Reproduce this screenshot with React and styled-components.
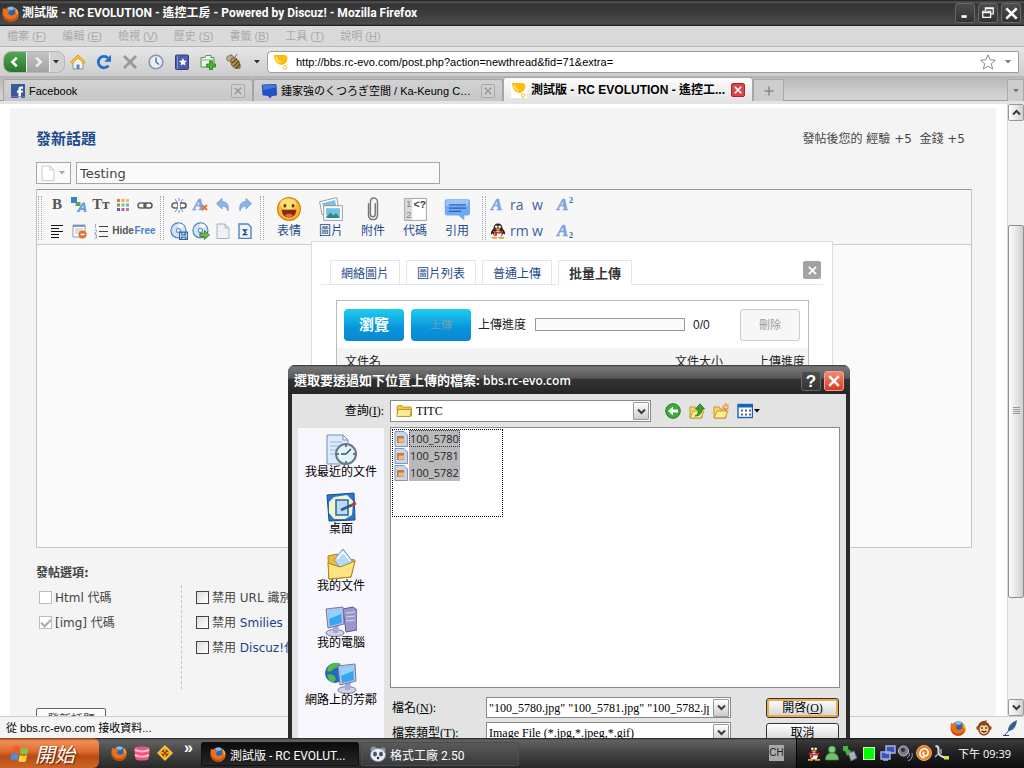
import React from "react";
import styled, { createGlobalStyle, css } from "styled-components";

const ui = '"Liberation Sans", "Noto Sans CJK TC", sans-serif';
const web = '"DejaVu Sans", "Noto Sans CJK TC", sans-serif';
const serif = '"Liberation Serif", "Noto Sans CJK TC", serif';
const caption = '"Open Sans", "Noto Sans CJK TC", sans-serif';

const GlobalStyle = createGlobalStyle`
  * {
    box-sizing: border-box;
  }
  body {
    margin: 0;
    overflow: hidden;
    font-family: ${ui};
    font-size: 12px;
    line-height: 16px;
    color: #000;
  }
  button, input, select {
    margin: 0;
    padding: 0;
    border: 0;
    border-radius: 0;
    background: none;
    font: inherit;
    color: inherit;
    outline: 0;
  }
  a {
    color: #1c3f8c;
    text-decoration: none;
  }
  svg {
    display: block;
    flex: none;
  }
`;

/* ---------- icons ---------- */

const Icon = ({ size = 16, children }) => (
  <svg width={size} height={size} viewBox="0 0 16 16" fill="none" aria-hidden="true">
    {children}
  </svg>
);

const BigIcon = ({ size = 32, children }) => (
  <svg width={size} height={size} viewBox="0 0 32 32" fill="none" aria-hidden="true">
    {children}
  </svg>
);

const Firefox = ({ size = 16 }) => (
  <Icon size={size}>
    <circle cx="8.4" cy="7.6" r="6.4" fill="#2d64ad" />
    <path d="M5 2.600c2-1.400 5-1.400 7 .4L9.500 5 6 4.600z" fill="#7fc0ea" />
    <path d="M1.400 2.500c.4.800 1 1.200 1.800 1.300C4 3 5 2.700 6 2.800 5.300 3.500 5 4.200 5.100 4.800c1 0 2 .1 2.400.7-.2.800-1.400 1-1.700 1.700.1 1.500 1.400 2.600 3 2.600 2 0 2.600-1.500 3.700-1.400-.5-2-.2-4-1.300-6 3 1.300 4.700 4 4.400 7-.4 3.700-3.400 6.400-7.200 6.400C4 15.800.6 12.600.5 8.500.4 6.200.6 4.200 1.400 2.500z" fill="#e8721a" />
    <path d="M1 7c.6 4 3.400 6.600 7 6.800 3 .1 5.600-1.500 6.500-4.500.2 3.600-2.800 6.400-6.600 6.400C3.700 15.700.6 12 1 7z" fill="#c64510" />
    <path d="M11.800 2.600c2.500 1.500 3.700 3.800 3.300 6.400-.4-.8-.9-1.300-1.500-1.500.2-1.900-.4-3.500-1.800-4.900z" fill="#fbc43a" />
  </Icon>
);

const Bulb = () => (
  <Icon>
    <rect width="16" height="16" fill="#fff" />
    <path d="M1 1h11c3.500 1 3 6 0 8.500L9.500 11C4 11 1 6 1 1z" fill="#ffbd0a" />
    <path d="M3 3c1 3 3 5 5 5" stroke="#ffe695" strokeWidth="1.500" />
    <circle cx="12" cy="13.500" r="1.700" stroke="#ffbd0a" />
  </Icon>
);

const Home = () => (
  <Icon>
    <path d="M3 7.500V15h10V7.500L8 3z" fill="#eef2f6" stroke="#83929f" />
    <path d="M8 1 .7 8 2 9.400 8 4l6 5.400L15.300 8z" fill="#fbc823" stroke="#d79100" strokeWidth=".8" />
    <path d="M6.500 15v-4.500h3V15z" fill="#5487c5" />
  </Icon>
);

const Reload = () => (
  <Icon>
    <path d="M12.500 11.500A5.700 5.700 0 1 1 12 4" stroke="#1d6fd0" strokeWidth="2.800" />
    <path d="M15 .8v7H8.300z" fill="#1d6fd0" />
  </Icon>
);

const Stop = () => (
  <Icon>
    <path d="m2 2 12 12M14 2 2 14" stroke="#999" strokeWidth="2.800" />
  </Icon>
);

const Clock = () => (
  <Icon>
    <circle cx="8" cy="8" r="6.800" fill="#e9f1f8" stroke="#8395a9" strokeWidth="1.600" />
    <path d="M8 3.500V8l3 2.400" stroke="#466689" strokeWidth="1.300" />
  </Icon>
);

const Book = () => (
  <Icon>
    <rect x="1.500" y="1" width="13" height="14.500" rx="1" fill="#4b5cab" stroke="#303d82" />
    <path d="M3.500 1.500V15" stroke="#7f8fd0" />
    <path d="m9 4 1.200 2.600 2.800.3-2.100 1.900.6 2.800L9 10.200l-2.500 1.400.6-2.800L5 6.900l2.800-.3z" fill="#fff" />
  </Icon>
);

const AddTab = () => (
  <Icon>
    <path d="M1 3.500h4l1-2h5v2h3V13H1z" fill="#eef3ee" stroke="#55965b" />
    <path d="M1 6h13" stroke="#7caf80" />
    <path d="M9.500 7h3v3h3v3h-3v3h-3v-3h-3v-3h3z" fill="#49b531" stroke="#26791b" strokeWidth=".8" />
  </Icon>
);

const Bee = () => (
  <Icon>
    <path d="M1 2 5 6M5 0l2 5M11 0 8 5" stroke="#75726a" />
    <ellipse cx="4.500" cy="4.500" rx="4" ry="3" fill="#b6b0a0" stroke="#827a60" />
    <path d="M5 5c3-3 10 1 9 9-6 2-10-3-9-9z" fill="#b69a4b" stroke="#6e5926" />
    <path d="m6 9 5-4M8 12l5-5M10 14l4-4" stroke="#594a2e" strokeWidth="1.500" />
  </Icon>
);

const Star = () => (
  <Icon>
    <path d="m8 .8 2.100 5 5.300.4-4.100 3.500 1.400 5.300L8 12.200 3.300 15l1.400-5.300L.6 6.200l5.300-.4z" fill="#fff" stroke="#8c8c8c" />
  </Icon>
);

const Down = ({ color = "#333" }) => (
  <svg width="6" height="4" viewBox="0 0 6 4" aria-hidden="true">
    <path d="M0 0h6L3 3.500z" fill={color} />
  </svg>
);

const Chevron = ({ up }) => (
  <svg width="9" height="7" viewBox="0 0 9 7" fill="none" aria-hidden="true">
    <path d={up ? "M1 5.500 4.500 2 8 5.500" : "M1 1.500 4.500 5 8 1.500"} stroke="#3b3b3b" strokeWidth="2" />
  </svg>
);

const Cross = ({ size = 10, color = "#fff", width = 2 }) => (
  <svg width={size} height={size} viewBox="0 0 10 10" aria-hidden="true">
    <path d="m1 1 8 8M9 1 1 9" stroke={color} strokeWidth={width} />
  </svg>
);

const FacebookMark = () => (
  <Icon size={14}>
    <rect width="16" height="16" fill="#3b5998" />
    <path d="M8.500 16v-6H6.800V7.500h1.700V6c0-2 1-3.200 3.200-3.200h2v2.600h-1.300c-.9 0-1.100.3-1.100 1v1.100h2.400L13.300 10h-2v6z" fill="#fff" />
    <path d="M0 14.500h16" stroke="#6d84b4" />
  </Icon>
);

const Bubble = () => (
  <Icon>
    <path d="M2 1.500 14 1c1 0 1.500.5 1.600 1.500L16 11c0 1-.5 1.500-1.500 1.700L11 13l-2 2.500L7 13l-4-.5c-1 0-1.500-.5-1.600-1.500L.8 3c0-1 .3-1.500 1.200-1.500z" fill="#234fc0" />
    <path d="m2 2.500 12.500-.7v3L2 7z" fill="#4877db" />
  </Icon>
);

const Page = ({ tint = "#fff", line = "#a9b3bf", size = 16 }) => (
  <Icon size={size}>
    <path d="M2 1h8l4 4v10.500H2z" fill={tint} stroke={line} />
    <path d="M10 1v4h4" stroke={line} />
  </Icon>
);

const ColorText = () => (
  <Icon>
    <rect width="6" height="6" x="0" y="0" fill="#3f7fd0" />
    <path d="M4.500 5h5v4h-5z" fill="#4fae48" />
    <path d="m5.500 15 6-9.500H14l1.500 9.500h-2.800l-.2-2H9.700l-1.200 2zm5.300-4h1.600l-.3-2.500z" fill="#6b9fe0" />
  </Icon>
);

const paletteColors = ["#e5734e", "#edaa58", "#e3c84d", "#6aa762", "#79bf87", "#78a9d8", "#685fa7", "#a76ba7", "#d77492"];

const Palette = () => (
  <Icon>
    {paletteColors.map((c, i) => (
      <rect key={c} x={2 + (i % 3) * 4.5} y={2 + Math.floor(i / 3) * 4.5} width="3" height="3" fill={c} />
    ))}
  </Icon>
);

const Link = ({ broken }) => (
  <Icon>
    <rect x="1" y="6" width="8" height="5" rx="2.500" stroke="#666" strokeWidth="1.500" />
    <rect x="7" y="6" width="8" height="5" rx="2.500" stroke="#555" strokeWidth="1.500" />
    {broken && <path d="m4 2 2 3M12 2l-2 3M8 1v3M4 15l2-3M12 15l-2-3M8 13v3" stroke="#5c91d3" />}
    {broken && <path d="M8 5v7" stroke="#f7f7f7" strokeWidth="2" />}
  </Icon>
);

const SmallA = ({ mark, clear }) => (
  <svg width="18" height="18" viewBox="0 0 18 18" aria-hidden="true">
    <text x="1" y="14" fontSize="17" fontStyle="italic" fontWeight="bold" fontFamily="Liberation Serif" fill="#7aa5e2" stroke="#7aa5e2" strokeWidth=".6">A</text>
    {mark && <text x="13" y={mark.y} fontSize="8" fontWeight="bold" fontFamily="Liberation Serif" fill="#3466a5">{mark.text}</text>}
    {clear && <path d="m10 9 5 5m0-5-5 5" stroke="#e8752d" strokeWidth="2" />}
  </svg>
);

const Arrow = ({ flip }) => (
  <Icon>
    <path transform={flip ? "translate(16 0) scale(-1 1)" : undefined} d="M1.500 6.500 7 1.500v3c5 0 7 3.500 6 9.500-1-3.500-2.500-5-6-5v3z" fill="#8db4e6" stroke="#6e9bd5" strokeWidth=".8" />
  </Icon>
);

const AlignLeft = () => (
  <Icon>
    <path d="M2 2.500h12M2 5.500h8M2 8.500h12M2 11.500h8M2 14.500h8" stroke="#111" strokeWidth="1.200" />
  </Icon>
);

const TableRemove = () => (
  <Icon>
    <path d="M2 2h12v12H2z" fill="#fff" stroke="#8f9aac" />
    <path d="M2 3h12" stroke="#7a9bc9" strokeWidth="2" />
    <path d="M4 6h8M4 8h8M4 10h4" stroke="#bbb" />
    <circle cx="11.500" cy="11.500" r="4" fill="#e2742c" />
    <path d="M9.500 11.500h4" stroke="#fff" strokeWidth="1.500" />
  </Icon>
);

const Numbers = () => (
  <Icon>
    <path d="M6 3.500h9M6 8.500h9M6 13.500h9" stroke="#444" />
    <path d="M2.500 1v4M1.500 7h2v1.500l-2 2h2M1.500 12h2v3h-2" stroke="#6c9dd8" strokeWidth=".8" />
  </Icon>
);

const Disc = ({ go }) => (
  <Icon size={18}>
    <circle cx="7.500" cy="7.500" r="6.700" fill="#cfe4f8" stroke="#4c7fb8" />
    <path d="m7.500 7.500 5-4a6 6 0 0 0-5-2.200z" fill="#fff" />
    <circle cx="7.500" cy="7.500" r="1.800" fill="#fff" stroke="#6896c8" />
    {go ? (
      <path d="M7 10h4V7.500l4.500 4-4.500 4V13H7z" fill="#6fbd41" stroke="#357b26" strokeWidth=".8" />
    ) : (
      <path d="M8.500 9h7v6.500h-7zM10.500 9v2.500h3V9M10 15.500v-2h4v2" fill="#cfe0f3" stroke="#315f98" strokeWidth=".9" />
    )}
  </Icon>
);

const Sigma = () => (
  <Icon>
    <path d="M2 1h9l3 3v11.500H2z" fill="#eef5fd" stroke="#4d85c3" strokeWidth="1.400" />
    <path d="M10.500 6.800h-4l2.200 2.400-2.200 2.500h4" stroke="#1b3f77" strokeWidth="1.300" />
  </Icon>
);

const Smile = () => (
  <BigIcon size={26}>
    <circle cx="16" cy="16" r="14" fill="#fdb72c" stroke="#d58112" strokeWidth="1.500" />
    <ellipse cx="15" cy="10" rx="10" ry="7" fill="#fddf70" />
    <ellipse cx="11" cy="12" rx="1.800" ry="2.300" fill="#5f3513" />
    <ellipse cx="21" cy="12" rx="1.800" ry="2.300" fill="#5f3513" />
    <path d="M7 17h18c0 6-4 9.500-9 9.500S7 23 7 17z" fill="#842b12" />
    <path d="M11 24c2-3 8-3 10 0-3 2.500-7 2.500-10 0z" fill="#ea6551" />
  </BigIcon>
);

const Photos = () => (
  <BigIcon size={26}>
    <path d="m2 7 21-5 3 16-21 5z" fill="#fff" stroke="#81898f" />
    <path d="m5 9 16-4 2 10-15 4z" fill="#7dbee1" />
    <path d="M7 12h23v18H7z" fill="#fff" stroke="#81898f" />
    <path d="M10 15h17v12H10z" fill="#74c2df" />
    <path d="m10 27 5-7 4 4 3-3 5 6z" fill="#2a8a8a" />
  </BigIcon>
);

const Clip = () => (
  <BigIcon size={26}>
    <path d="M10.500 9v14c0 3.500 2 6 5.500 6s5.500-2.500 5.500-6V8c0-3-1.500-5.500-4.500-5.500S12.800 5 12.800 8v14c0 2 1 3.500 3 3.500s3-1.500 3-3.500V9" stroke="#777" strokeWidth="1.800" />
  </BigIcon>
);

const Code = () => (
  <BigIcon size={26}>
    <path d="M3 3h27v27H3z" fill="#fff" stroke="#8e8e8e" />
    <path d="M3.500 3.500h9v26h-9z" fill="#d9d9d9" />
    <text x="5" y="14" fontSize="12" fontFamily="Liberation Sans" fill="#888">1</text>
    <text x="5" y="27" fontSize="12" fontFamily="Liberation Sans" fill="#888">2</text>
    <text x="14" y="15" fontSize="13" fontWeight="bold" fontFamily="Liberation Mono" fill="#444">&lt;?</text>
  </BigIcon>
);

const Quote = () => (
  <BigIcon size={26}>
    <path d="M4 4h25c2 0 3 1 3 3v14c0 2-1 3-3 3h-4v6l-7-6H4c-2 0-3-1-3-3V7c0-2 1-3 3-3z" fill="#73a9f4" />
    <path d="M3 5h27v7H2z" fill="#9cc6fb" />
    <path d="M6 11h21M6 15h21M6 19h15" stroke="#2b5fb3" strokeWidth="1.500" />
  </BigIcon>
);

const Penguin = ({ size = 16 }) => (
  <Icon size={size}>
    <path d="M8 .5c3 0 4.500 2 4.500 5 2 2 3 4 2.500 6l-2-1c-.5 2-2 4-5 4s-4.500-2-5-4l-2 1c-.5-2 .5-4 2.500-6 0-3 1.500-5 4.500-5z" fill="#2b2222" />
    <ellipse cx="8" cy="11" rx="3.700" ry="3.500" fill="#fff" />
    <circle cx="6.300" cy="3.700" r="1.300" fill="#fff" />
    <circle cx="9.700" cy="3.700" r="1.300" fill="#fff" />
    <path d="M5 6c2-1 4-1 6 0-2 1.500-4 1.500-6 0zM2 14h5v1.700H2zM9 14h5v1.700H9z" fill="#f7a022" />
    <path d="M3 7.500c3 1.500 7 1.500 10 0V9.400c-2 1-4 1.300-6 1.100v2.200H5V10L3 9.300z" fill="#d92b22" />
  </Icon>
);

const Folder = ({ size = 16 }) => (
  <Icon size={size}>
    <path d="M1 4c0-1 .5-1.500 1.500-1.500H6L7.500 4H14c1 0 1.500.5 1.500 1.500V13h-14z" fill="#f0c740" stroke="#b58c1b" strokeWidth=".8" />
    <path d="M.8 13.500 2 6.500h13.300L14 13.500z" fill="#fdeb94" stroke="#b58c1b" strokeWidth=".8" />
  </Icon>
);

const GoBack = () => (
  <Icon>
    <circle cx="8" cy="8" r="7.300" fill="#3eaa38" stroke="#23761f" />
    <path d="M3 8 8 3.500v3h5v3H8v3z" fill="#fff" />
  </Icon>
);

const GoUp = () => (
  <Icon>
    <path d="M1 4h5l1 2h6v9H1z" fill="#f6d865" stroke="#b58c1b" strokeWidth=".8" />
    <path d="m1 15 3-7h11l-3 7z" fill="#fdeb94" stroke="#b58c1b" strokeWidth=".8" />
    <path d="M6 13c3-1 3.500-3 3-7H6.500L11 .8 15.500 6H13c0 4-2 7-7 7z" fill="#38a030" stroke="#1f6f1a" strokeWidth=".8" />
  </Icon>
);

const NewFolder = () => (
  <Icon>
    <path d="M1 4h5l1 2h6v9H1z" fill="#f6d865" stroke="#b58c1b" strokeWidth=".8" />
    <path d="m1 15 3-7h11l-3 7z" fill="#fdeb94" stroke="#b58c1b" strokeWidth=".8" />
    <path d="M13 0v8M9 4h8M10.500 1.500l5 5m0-5-5 5" stroke="#ee6a28" />
    <circle cx="13" cy="4" r="1.500" fill="#ffd76b" />
  </Icon>
);

const Views = () => (
  <Icon>
    <rect x="1" y="1.500" width="14.500" height="13" fill="#fff" stroke="#1763bb" strokeWidth="1.400" />
    <path d="M1 3h14.500" stroke="#1763bb" strokeWidth="3" />
    <path d="M4 7.500h2m2 0h2m2 0h2M4 11.500h2m2 0h2m2 0h2" stroke="#426b9a" strokeWidth="2" />
  </Icon>
);

const Jpeg = () => (
  <Icon>
    <path d="M2 .5h9l3.500 3.500v11.500H2z" fill="#c9d5e8" stroke="#8194ba" />
    <path d="M4 5h7v7H4z" fill="#c07a4a" />
    <path d="M5.500 7.500h6v4h-6z" fill="#eab988" />
  </Icon>
);

const Recent = () => (
  <BigIcon>
    <path d="M2 1h16l5 5v24H2z" fill="#dcebfb" stroke="#738db4" />
    <path d="M18 1v5h5z" fill="#fff" stroke="#738db4" />
    <path d="M5 8h12M5 12h12M5 16h8M5 20h7" stroke="#96b4d8" />
    <circle cx="21" cy="20" r="10" fill="#e4f2f9" stroke="#647889" strokeWidth="2" />
    <path d="m21 20 5-5M21 20h-5M21 11v2M21 27v2M12 20h2M28 20h2" stroke="#3b5263" strokeWidth="1.500" />
  </BigIcon>
);

const Desktop = () => (
  <BigIcon>
    <path d="m2 4 27-2 1 27-26 1z" fill="#2b76d0" stroke="#174b91" />
    <path d="m9 6 13-2 6 6-1 14-7 4H9l-5-6V11z" fill="#f4f3cb" />
    <path d="M11 9h12v15H11z" fill="#b9dcfa" stroke="#2467aa" strokeWidth="1.500" />
    <path d="m16 19 11-5" stroke="#35577c" strokeWidth="2.500" />
    <path d="m27 14 4-2" stroke="#c6383c" strokeWidth="3" />
  </BigIcon>
);

const Documents = () => (
  <BigIcon>
    <path d="m3 8 9-2 3 4 15 2-4 17-22 2z" fill="#f0ba35" stroke="#ae811d" />
    <path d="M9 12 18 1l10 13-9 11z" fill="#b5d9f5" stroke="#6e97c1" />
    <path d="m12 11 6-7 7 9" stroke="#fff" strokeWidth="1.500" />
    <path d="m4 31-1-16 12 4 15-6-4 16z" fill="#fee382" stroke="#ae811d" />
  </BigIcon>
);

const Monitor = ({ globe }) => (
  <BigIcon>
    {globe ? (
      <>
        <circle cx="10" cy="11" r="10" fill="#2467c1" />
        <path d="M3 5c4-5 9-5 13-3-3 2-4 4-8 5-1 3-4 3-6 2zm-1 8c4-2 8 0 9 4-2 4-5 4-7 1z" fill="#52b94b" />
      </>
    ) : (
      <path d="m18 4 10-2 4 3v20l-11 2z" fill="#9a97cf" stroke="#58588e" />
    )}
    {!globe && <path d="m21 8 9-1M21 12l9-1M21 16l9-1" stroke="#d7d6f0" />}
    <g transform={globe ? "translate(12 0)" : undefined}>
      <ellipse cx="10" cy="28" rx="9" ry="3.500" fill="#d0d2e6" stroke="#7477a2" />
      <path d="M8 20h6l-1 8H8z" fill="#a8abd1" />
      <path d="m1 4 17-2 1 17-16 4z" fill="#bfc5e3" stroke="#7177a9" />
      <path d="m3 6 13-2 1 14-12 3z" fill="#39a4ef" />
      <path d="m3 6 13-2v5L4 14z" fill="#8ed3fb" />
    </g>
  </BigIcon>
);

const WindowsFlag = () => (
  <Icon size={20}>
    <path d="M2.500 3c2-1 4-1 5.500 0L7 8C5.500 7 3.500 7 1.500 8z" fill="#f05a32" />
    <path d="M9 3.500c2 1 4 1 6 0L14 8.500c-2 1-4 1-6 0z" fill="#86c440" />
    <path d="M1.200 9c2-1 4-1 5.600 0l-1 5C4 13 2 13 .2 14z" fill="#4c8ee8" />
    <path d="M7.700 9.500c2 1 4 1 6 0l-1 5c-2 1-4 1-6 0z" fill="#ffd13c" />
  </Icon>
);

const Candy = () => (
  <Icon>
    <path d="M.5 3c1-2 14-2 15 0v4l-1 7c-1 2-12 2-13 0l-1-7z" fill="#ee5680" />
    <path d="M1 5c5 2 9 2 14 0M1 10c4 2 10 2 14 0" stroke="#ffc0ce" strokeWidth="2" />
  </Icon>
);

const Diamond = () => (
  <Icon>
    <path d="m8 0 8 8-8 8-8-8z" fill="#f6c22e" />
    <path d="m8 3 5 5-5 5-5-5z" fill="#893818" />
    <path d="M8 3v10M3 8h10" stroke="#f6c22e" strokeWidth="1.500" />
    <circle cx="8" cy="8" r="1.500" fill="#c72f22" />
  </Icon>
);

const Panda = () => (
  <Icon>
    <circle cx="3.500" cy="3.500" r="3" fill="#8a98a8" />
    <circle cx="13" cy="4" r="2.500" fill="#8a98a8" />
    <ellipse cx="8" cy="9" rx="7.500" ry="6.500" fill="#eaf0f5" stroke="#8a98a8" strokeWidth=".8" />
    <ellipse cx="5" cy="8" rx="2" ry="2.500" fill="#435568" />
    <ellipse cx="11" cy="8" rx="2" ry="2.500" fill="#435568" />
    <circle cx="8" cy="12" r="1.200" fill="#222" />
  </Icon>
);

const Monkey = () => (
  <Icon>
    <circle cx="2.500" cy="8" r="2.300" fill="#a95e25" />
    <circle cx="13.500" cy="8" r="2.300" fill="#a95e25" />
    <path d="M2 8c0-5 3-7 6-7l3-1-1 2c3 1 4 3 4 7 0 4-3 6.500-6 6.500S2 13 2 8z" fill="#8c4619" />
    <path d="M4 7c1-2 3-2 4-1 1-1 3-1 4 1 1 2 .5 7-4 7s-5-5-4-7z" fill="#fbd797" />
    <path d="M6 7v2M10 7v2M5.500 11c2 1.500 3 1.500 5 0" stroke="#3c2010" strokeWidth="1.200" />
  </Icon>
);

const Quill = () => (
  <Icon>
    <path d="M15 0c-1 7-3 10-8 11L6 9c1-4 4-7 9-9z" fill="#326396" />
    <path d="M8 9 3 15M1 15.500h6" stroke="#22486f" />
  </Icon>
);

const Buddy = () => (
  <Icon>
    <circle cx="8" cy="4.500" r="3.500" fill="#82cd78" stroke="#3b8539" strokeWidth=".7" />
    <path d="M1.500 15c0-5 2.500-7 6.500-7s6.500 2 6.500 7z" fill="#72bf69" stroke="#3b8539" strokeWidth=".7" />
  </Icon>
);

const Eject = () => (
  <Icon>
    <path d="m6 8 6-2 3 7-6 3z" fill="#aab3ba" stroke="#59636b" />
    <path d="M1 1h5v3l3 2-4 5-2-5H1z" fill="#46b33f" />
  </Icon>
);

const Network = () => (
  <Icon>
    <path d="M6 1h9v7H6zM1 7h9v7H1z" fill="#3856b8" stroke="#aab4df" strokeWidth="1.400" />
    <path d="M3 15h5" stroke="#aab4df" strokeWidth="1.500" />
  </Icon>
);

const Speaker = () => (
  <Icon>
    <circle cx="5.500" cy="6" r="5" fill="#777b86" stroke="#bec3cc" />
    <circle cx="5" cy="5" r="2" fill="#2c3039" />
    <path d="M11 8c1 2 0 4-2 5M14 8c1 4-1 7-4 8" stroke="#9aa6d2" />
  </Icon>
);

const Shield = () => (
  <Icon>
    <circle cx="8" cy="8" r="7.500" fill="#f07c18" stroke="#ffc57e" strokeWidth=".8" />
    <path d="M8.500 12.800C5 12.500 3.500 10 4 7.300 4.600 4 9 2.500 11.300 5c2 2.500.5 5.800-2 5.800C7 10.800 6.500 8 8.300 7" stroke="#fff" strokeWidth="1.700" />
  </Icon>
);

const Plug = () => (
  <Icon>
    <path d="M1.500 1c1.500 0 3 1 3 3v4c0 2 2 3 6 4.500" stroke="#ddd" strokeWidth="2" />
    <path d="m4 9-3 3M7 4v5" stroke="#aaa" strokeWidth="1.500" />
    <path d="M10 11h5v3.500h-5z" fill="#d9e04c" />
  </Icon>
);

/* ---------- browser chrome ---------- */

const Screen = styled.div`
  display: flex;
  flex-direction: column;
  height: 100vh;
`;

const Workspace = styled.div`
  position: relative;
  flex: 1;
  min-height: 0;
  display: flex;
  flex-direction: column;
  overflow: hidden;
`;

const TitleBar = styled.header`
  display: flex;
  align-items: center;
  gap: 3px;
  height: 26px;
  padding: 0 3px 0 2px;
  background: linear-gradient(#1c1c1c 0, #565656 2px, #333 4px, #3c3c3c 50%, #4b4b4b 24px, #151515);
  color: #fff;
  font: bold 12px/16px Roboto, "Noto Sans CJK TC", sans-serif;
`;

const WindowTitle = styled.span`
  flex: 1;
  white-space: nowrap;
`;

const CaptionButton = styled.button`
  display: grid;
  place-items: center;
  flex: none;
  width: 20px;
  height: 20px;
  border: 1px solid ${p => (p.$danger ? "#f4a08f" : "#686868")};
  border-radius: 3px;
  background: ${p => (p.$danger ? "linear-gradient(#f28a72, #d93b1d)" : "linear-gradient(#4d4d4d, #333)")};
  color: #fff;
  font: bold 17px ${ui};
`;

const MenuBar = styled.nav`
  display: flex;
  align-items: center;
  gap: 16px;
  height: 21px;
  padding: 0 7px;
  background: #dadada;
  border-bottom: 1px solid #b8b8b8;
  font-size: 11px;
`;

const MenuItem = styled.button`
  color: #a9a9a9;
  white-space: nowrap;
`;

const NavBar = styled.div`
  display: flex;
  align-items: center;
  gap: 10px;
  height: 29px;
  padding: 0 5px 0 3px;
  background: linear-gradient(#e6e6e6, #cdcdcd);
`;

const History = styled.div`
  display: flex;
  align-items: center;
  height: 22px;
  padding-right: 2px;
  margin-right: -5px;
  border: 1px solid #b4b4b4;
  border-radius: 8px;
  overflow: hidden;
  background: #d2d2d2;
`;

const HistoryButton = styled.button`
  display: grid;
  place-items: center;
  width: 23px;
  height: 22px;
  background: ${p => (p.$on ? "linear-gradient(#5aa957, #217525)" : "linear-gradient(#c5c5c5, #a2a2a2)")};
  border-right: 1px solid #eee;
`;

const IconButton = styled.button`
  display: grid;
  place-items: center;
  flex: none;
  min-width: ${p => p.$w || 16}px;
`;

const AddressBar = styled.div`
  flex: 1;
  display: flex;
  align-items: center;
  gap: 7px;
  height: 22px;
  margin-left: -5px;
  padding: 0 5px;
  border: 1px solid #9d9d9d;
  border-radius: 4px 0 0 4px;
  background: #fff;
  font-size: 11px;
`;

const Address = styled.input`
  flex: 1;
  min-width: 0;
`;

const TabBar = styled.div`
  display: flex;
  align-items: flex-end;
  height: 28px;
  padding-left: 3px;
  background: linear-gradient(#b5b5b5, #d3d3d3 20px);
  border-bottom: 3px solid #e4e4e4;
  box-shadow: inset 0 -1px #9c9c9c;
`;

const BrowserTab = styled.div`
  display: flex;
  align-items: center;
  gap: 4px;
  flex: 0 1 250px;
  min-width: 0;
  height: ${p => (p.$active ? 24 : 22)}px;
  padding: 0 7px;
  border: 1px solid #a5a5a5;
  border-bottom: 0;
  border-radius: 3px 3px 0 0;
  background: ${p => (p.$active ? "linear-gradient(#fdfdfd, #e4e4e4)" : "linear-gradient(#d2d2d2, #c6c6c6)")};
  font-weight: ${p => (p.$active ? "bold" : "normal")};
  font-size: ${p => (p.$active ? 12 : 11)}px;
`;

const TabLabel = styled.span`
  flex: 1;
  overflow: hidden;
  white-space: nowrap;
  text-overflow: ellipsis;
`;

const TabClose = styled.button`
  display: grid;
  place-items: center;
  flex: none;
  width: 14px;
  height: 14px;
  border: 1px solid ${p => (p.$active ? "#a42b2b" : "#a9a9a9")};
  border-radius: 2px;
  background: ${p => (p.$active ? "#d64949" : "#cfcfcf")};
`;

const SideTab = styled.button`
  display: grid;
  place-items: center;
  width: ${p => p.$w}px;
  height: 22px;
  border: 1px solid #a9a9a9;
  border-bottom: 0;
  background: #cdcdcd;
  margin-left: ${p => (p.$end ? "auto" : 0)};
`;

/* ---------- page ---------- */

const Viewport = styled.div`
  flex: 1;
  min-height: 0;
  display: flex;
`;

const PageArea = styled.main`
  flex: 1;
  min-width: 0;
  padding: 4px 11px 0 10px;
  background: #fff;
  overflow: hidden;
  font-family: ${web};
  color: #444;
`;

const Sheet = styled.div`
  min-height: 100%;
  padding: 21px 24px 0 26px;
  background: #f4f4f4;
`;

const Heading = styled.div`
  display: flex;
  justify-content: space-between;
  align-items: center;
  height: 20px;
  padding-right: 7px;
`;

const H1 = styled.h1`
  margin: 0;
  font-size: 15px;
  line-height: 20px;
  color: #1e4a8c;
`;

const Reward = styled.span`
  white-space: pre;
`;

const SubjectRow = styled.div`
  display: flex;
  gap: 5px;
  margin: 13px 0 5px;
`;

const TypeButton = styled.button`
  display: flex;
  align-items: center;
  gap: 3px;
  width: 35px;
  height: 22px;
  padding-left: 3px;
  border: 1px solid #a5a5a5;
  background: #fafafa;
`;

const Subject = styled.input`
  width: 364px;
  height: 22px;
  padding: 0 3px;
  border: 1px solid #a5a5a5;
  background: #fafafa;
  font-size: 13px;
`;

const Editor = styled.section`
  position: relative;
  height: 359px;
  border: 1px solid #c5c5c5;
  border-top-color: #999;
  background: #fafafa;
`;

const Toolbar = styled.div`
  display: flex;
  align-items: center;
  gap: 4px;
  height: 55px;
  padding: 1px 0 0 1px;
  border-bottom: 1px solid #ccc;
  background: #f7f7f7;
`;

const Grip = styled.span`
  width: 4px;
  height: 44px;
  border: dotted #aaa;
  border-width: 0 1px;
`;

const ToolGrid = styled.div`
  display: grid;
  grid-template-columns: repeat(${p => p.$cols}, 22px);
  grid-auto-rows: 26px;
`;

const Tool = styled.button`
  display: grid;
  place-items: center;
  min-width: 0;
  white-space: nowrap;
  ${p => p.$letter && css`
    font: bold 15px ${serif};
    color: #555;
  `}
  ${p => p.$tag && css`
    font: bold 10px "Liberation Sans", sans-serif;
    color: ${p.$tag};
  `}
`;

const BigTools = styled.div`
  display: grid;
  grid-template-columns: repeat(5, 42px);
`;

const BigTool = styled.button`
  display: grid;
  justify-items: center;
  row-gap: 1px;
  color: #1e4a8c;
  line-height: 16px;
`;

const ExtraTools = styled.div`
  display: grid;
  grid-template-columns: 20px 22px 24px 20px;
  grid-auto-rows: 26px;
  align-items: center;
  color: #3c5fa0;
  font: 14px/16px "Open Sans", sans-serif;
`;

const Options = styled.section`
  padding-top: 17px;
`;

const OptionsTitle = styled.h2`
  margin: 0 0 4px;
  font-size: 12px;
  line-height: 16px;
`;

const OptionColumns = styled.div`
  display: flex;
`;

const OptionColumn = styled.div`
  min-height: 104px;
  width: ${p => p.$w}px;
  padding-left: ${p => p.$pad}px;
  border-right: ${p => (p.$line ? "1px dashed #c4c4c4" : 0)};
`;

const Option = styled.label`
  display: flex;
  align-items: center;
  gap: 3px;
  height: 25px;
  white-space: pre;
`;

const Checkbox = styled.input.attrs({ type: "checkbox" })`
  appearance: none;
  display: grid;
  place-items: center;
  width: 13px;
  height: 13px;
  border: 1px solid #444;
  background: linear-gradient(135deg, #ddd, #fff);
  &:disabled {
    border-color: #bdbdbd;
    background: #fff;
  }
  &:checked::after {
    content: "";
    width: 8px;
    height: 4px;
    border: solid #aaa;
    border-width: 0 0 2px 2px;
    transform: translateY(-1px) rotate(-45deg);
  }
`;

const Submit = styled.button`
  width: 70px;
  height: 24px;
  margin-top: 19px;
  border: 1px solid #666;
  border-radius: 2px;
  background: #fafafa;
`;

const Scrollbar = styled.div`
  display: flex;
  flex-direction: column;
  width: 17px;
  background: #f1f1f1;
  border-left: 1px solid #ddd;
`;

const ScrollButton = styled.button`
  display: grid;
  place-items: center;
  height: 17px;
  border: 1px solid #999;
  border-radius: 2px;
  background: linear-gradient(90deg, #fff, #d0d0d0);
`;

const ScrollGap = styled.div`
  flex: ${p => p.$size};
`;

const ScrollThumb = styled.div`
  flex: 373;
  display: grid;
  place-items: center;
  border: 1px solid #8f8f8f;
  border-radius: 2px;
  background: linear-gradient(90deg, #fdfdfd, #cfcfcf);
  &::after {
    content: "";
    width: 7px;
    height: 8px;
    background: repeating-linear-gradient(#999 0 1px, transparent 1px 2px);
  }
`;

const StatusBar = styled.footer`
  display: flex;
  align-items: center;
  justify-content: space-between;
  height: 22px;
  padding: 0 6px;
  border-top: 1px solid #ccc;
  background: #f4f4f4;
  font-size: 11px;
`;

const StatusIcons = styled.div`
  display: flex;
  gap: 10px;
`;

/* ---------- upload popup ---------- */

const Popup = styled.div`
  position: absolute;
  top: 51px;
  left: 274px;
  width: 522px;
  height: 306px;
  padding: 18px 9px 0;
  border: 1px solid #ddd;
  background: #fff;
`;

const PopupTabs = styled.div`
  display: flex;
  gap: 6px;
  height: 25px;
  padding: 0 2px 0 9px;
  border-bottom: 1px solid #e0e6ec;
`;

const PopupTab = styled.button`
  height: 25px;
  padding: 2px 10px 0;
  border: 1px solid #e0e6ec;
  border-bottom-color: ${p => (p.$active ? "#fff" : "#e0e6ec")};
  background: #fff;
  color: ${p => (p.$active ? "#333" : "#1e4a8c")};
  font-weight: ${p => (p.$active ? "bold" : "normal")};
  font-size: ${p => (p.$active ? 13 : 12)}px;
`;

const PopupClose = styled.button`
  display: grid;
  place-items: center;
  width: 18px;
  height: 18px;
  margin: 1px 0 0 auto;
  border-radius: 2px;
  background: #a3a3a3;
`;

const Uploader = styled.div`
  height: 200px;
  margin: 15px 14px 0 15px;
  border: 1px solid #bbb;
  background: #fff;
  font-family: ${ui};
  color: #222;
`;

const UploadBar = styled.div`
  display: flex;
  align-items: center;
  gap: 7px;
  height: 47px;
  padding: 0 8px 0 7px;
`;

const UploadButton = styled.button`
  width: 60px;
  height: 32px;
  border-radius: 4px;
  background: linear-gradient(#1fcdf0, #0894dc 60%, #0a87d0);
  color: #fff;
  font-size: 15px;
  font-weight: bold;
  &:disabled {
    color: #6f9fb3;
    font-size: 11px;
    font-weight: normal;
  }
`;

const DeleteButton = styled.button`
  width: 60px;
  height: 32px;
  margin-left: auto;
  border: 1px solid #ccc;
  border-radius: 3px;
  background: #f7f7f7;
  color: #999;
  font-size: 11px;
`;

const Meter = styled.div`
  width: 150px;
  height: 13px;
  margin: 0 1px 0 2px;
  border: 1px solid #999;
  background: #fafafa;
`;

const UploadTable = styled.table`
  width: 100%;
  border-collapse: collapse;
  background: #f3f3f3;
  th {
    height: 26px;
    padding: 2px 0 0 8px;
    font-weight: normal;
    text-align: left;
  }
  th:nth-child(2) {
    width: 82px;
    padding-left: 0;
  }
  th:nth-child(3) {
    width: 51px;
    padding-left: 0;
  }
`;

/* ---------- file dialog ---------- */

const Dialog = styled.section`
  position: absolute;
  top: 365px;
  left: 288px;
  width: 562px;
  height: 400px;
  border: solid #2b2b2b;
  border-width: 0 4px;
  border-radius: 7px 7px 0 0;
  background: #e3e3e3;
  font-family: ${serif};
`;

const DialogTitle = styled.header`
  display: flex;
  align-items: center;
  gap: 3px;
  height: 29px;
  margin: 0 -4px;
  padding: 2px 6px 0;
  border-radius: 7px 7px 0 0;
  background: linear-gradient(#333 0, #777 2px, #585858 45%, #333 50%, #262626);
  color: #fff;
  font: bold 13px/16px ${caption};
`;

const DialogSite = styled.span`
  font-size: 12px;
  font-weight: 600;
`;

const DialogBody = styled.div`
  display: grid;
  grid-template-columns: 86px 1fr;
  column-gap: 6px;
  padding: 6px 6px 0;
`;

const LookLabel = styled.label`
  justify-self: end;
  align-self: center;
`;

const LookRow = styled.div`
  display: flex;
  align-items: center;
  gap: 8px;
  height: 22px;
`;

const Combo = styled.div`
  display: flex;
  align-items: center;
  width: ${p => p.$w}px;
  height: ${p => p.$h || 21}px;
  padding: 0 1px 0 ${p => (p.$h ? 5 : 2)}px;
  gap: 4px;
  border: 1px solid #8a8a8a;
  background: #fff;
  select, input {
    appearance: none;
    flex: 1;
    min-width: 0;
  }
`;

const ComboArrow = styled.button`
  display: grid;
  place-items: center;
  width: 16px;
  height: 18px;
  border: 1px solid #999;
  border-radius: 1px;
  background: linear-gradient(#fff, #ccc);
`;

const DialogTools = styled.div`
  display: flex;
  gap: 8px;
  margin-left: 6px;
`;

const ViewButton = styled.button`
  display: flex;
  align-items: center;
  gap: 1px;
`;

const Places = styled.div`
  display: flex;
  flex-direction: column;
  align-self: stretch;
  margin-top: 6px;
  padding-top: 6px;
  background: #f8f7fd;
`;

const Place = styled.button`
  display: flex;
  flex-direction: column;
  align-items: center;
  height: 57px;
  line-height: 13px;
  white-space: nowrap;
`;

const Files = styled.div`
  padding-top: 5px;
`;

const FileList = styled.ul`
  position: relative;
  height: 261px;
  width: 450px;
  margin: 0;
  padding: 2px 2px;
  border: 1px solid #8a8a8a;
  background: #fff;
  list-style: none;
`;

const FileRow = styled.li`
  display: flex;
  align-items: center;
  height: 17px;
`;

const FileName = styled.span`
  height: 17px;
  padding: 0 1px;
  background: #b9b9b9;
  color: #2c1c30;
  font: 11px/17px "Open Sans", sans-serif;
  outline: ${p => (p.$focus ? "1px dotted #333" : 0)};
  outline-offset: -1px;
`;

const Marquee = styled.div`
  position: absolute;
  top: 1px;
  left: 1px;
  width: 111px;
  height: 88px;
  border: 1px dotted #000;
`;

const FileForm = styled.div`
  display: grid;
  grid-template-columns: 93px 245px 73px;
  grid-auto-rows: 21px;
  column-gap: 1px;
  row-gap: 4px;
  margin-top: 9px;
  padding-left: 2px;
  align-items: center;
`;

const DialogButton = styled.button`
  height: 20px;
  width: 73px;
  margin-left: 34px;
  border: 1px solid #333;
  border-radius: 3px;
  background: linear-gradient(#fff, #d2d2d2);
  box-shadow: ${p => (p.$primary ? "inset 0 0 0 2px #eda94a" : "none")};
`;

/* ---------- taskbar ---------- */

const Taskbar = styled.footer`
  display: flex;
  align-items: stretch;
  height: 30px;
  background: linear-gradient(#222 0, #626262 2px, #4b4b4b 12px, #272727);
  color: #fff;
`;

const Start = styled.button`
  display: flex;
  align-items: center;
  gap: 5px;
  width: 99px;
  padding-left: 10px;
  border-radius: 0 6px 6px 0;
  background: linear-gradient(#8b3f16 0, #f09058 3px, #df6b2c 45%, #b84c14 60%, #cc6527);
  font: italic 20px ${ui};
  text-shadow: 1px 1px 1px #5c2205;
`;

const QuickLaunch = styled.div`
  display: flex;
  align-items: center;
  gap: 7px;
  width: 102px;
  padding-left: 12px;
`;

const More = styled.button`
  align-self: flex-start;
  padding: 2px 0 0 4px;
  font-size: 16px;
  font-weight: bold;
`;

const Task = styled.button`
  display: flex;
  align-items: center;
  gap: 4px;
  flex: 0 1 158px;
  height: 24px;
  margin: 4px 2px 0 0;
  padding: 0 8px;
  border: 1px solid ${p => (p.$active ? "#111" : "#4d4d4d")};
  border-radius: 2px;
  background: ${p => (p.$active ? "linear-gradient(#0c0c0c, #262626)" : "linear-gradient(#5a5a5a, #3a3a3a)")};
  font: 12px Roboto, "Noto Sans CJK TC", sans-serif;
  white-space: nowrap;
`;

const Lang = styled.button`
  align-self: center;
  width: 15px;
  height: 16px;
  margin: 0 12px 0 auto;
  background: #a9a9a9;
  color: #222;
  font-size: 10px;
`;

const Tray = styled.div`
  display: flex;
  align-items: center;
  gap: 2px;
  padding: 0 13px 0 9px;
  border-left: 1px solid #000;
  background: linear-gradient(#111 0, #3b3b3b 2px, #262626 12px, #0c0c0c);
`;

const GreenBox = styled.span`
  width: 12px;
  height: 13px;
  margin: 0 3px;
  border: 1px solid #d5f5cf;
  background: #0f0;
`;

const Time = styled.time`
  margin-left: 6px;
  font: 11px ${caption};
  white-space: nowrap;
`;

const menus = ["檔案 (F)", "編輯 (E)", "檢視 (V)", "歷史 (S)", "書籤 (B)", "工具 (T)", "說明 (H)"];

const navIcons = [
  ["首頁", Home],
  ["重新載入", Reload],
  ["停止", Stop],
  ["歷史", Clock],
  ["書籤", Book],
  ["新分頁", AddTab],
  ["擴充", Bee]
];

const bigTools = [
  ["表情", Smile],
  ["圖片", Photos],
  ["附件", Clip],
  ["代碼", Code],
  ["引用", Quote]
];

const places = [
  ["我最近的文件", <Recent />],
  ["桌面", <Desktop />],
  ["我的文件", <Documents />],
  ["我的電腦", <Monitor />],
  ["網路上的芳鄰", <Monitor globe />]
];

const files = ["100_5780", "100_5781", "100_5782"];

const BrowserChrome = () => (
  <>
    <TitleBar>
      <Firefox size={17} />
      <WindowTitle>測試版 - RC EVOLUTION - 遙控工房 - Powered by Discuz! - Mozilla Firefox</WindowTitle>
      <CaptionButton aria-label="最小化">
        <Icon size={14}><path d="M4 12h6" stroke="#fff" strokeWidth="3" /></Icon>
      </CaptionButton>
      <CaptionButton aria-label="還原">
        <Icon size={14}><path d="M5 5V2h9v7h-3M2 6h9v7H2zM2 7.500h9M5 3h9" stroke="#fff" strokeWidth="1.400" /></Icon>
      </CaptionButton>
      <CaptionButton aria-label="關閉"><Cross size={13} /></CaptionButton>
    </TitleBar>
    <MenuBar>
      {menus.map(m => (
        <MenuItem key={m}>
          {m.slice(0, -2)}
          <u>{m.slice(-2, -1)}</u>)
        </MenuItem>
      ))}
    </MenuBar>
    <NavBar>
      <History>
        <HistoryButton $on aria-label="上一頁">
          <Icon size={14}><path d="m10 3-5 5 5 5" stroke="#fff" strokeWidth="3" /></Icon>
        </HistoryButton>
        <HistoryButton aria-label="下一頁">
          <Icon size={14}><path d="m6 3 5 5-5 5" stroke="#eee" strokeWidth="3" /></Icon>
        </HistoryButton>
        <IconButton $w={12} aria-label="瀏覽記錄"><Down /></IconButton>
      </History>
      {navIcons.map(([label, Glyph]) => (
        <IconButton key={label} aria-label={label}><Glyph /></IconButton>
      ))}
      <IconButton $w={10} aria-label="更多"><Down /></IconButton>
      <AddressBar>
        <Bulb />
        <Address aria-label="網址" defaultValue="http://bbs.rc-evo.com/post.php?action=newthread&fid=71&extra=" />
        <IconButton aria-label="加入書籤"><Star /></IconButton>
        <IconButton $w={10} aria-label="網址清單"><Down color="#777" /></IconButton>
      </AddressBar>
    </NavBar>
    <TabBar>
      <BrowserTab>
        <FacebookMark />
        <TabLabel>Facebook</TabLabel>
        <TabClose aria-label="關閉分頁"><Cross size={8} color="#999" /></TabClose>
      </BrowserTab>
      <BrowserTab>
        <Bubble />
        <TabLabel>鍾家強のくつろぎ空間 / Ka-Keung CH...</TabLabel>
        <TabClose aria-label="關閉分頁"><Cross size={8} color="#999" /></TabClose>
      </BrowserTab>
      <BrowserTab $active>
        <Bulb />
        <TabLabel>測試版 - RC EVOLUTION - 遙控工...</TabLabel>
        <TabClose $active aria-label="關閉分頁"><Cross size={8} /></TabClose>
      </BrowserTab>
      <SideTab $w={31} aria-label="開新分頁">
        <Icon size={12}><path d="M8 2v12M2 8h12" stroke="#888" strokeWidth="2" /></Icon>
      </SideTab>
      <SideTab $w={17} $end aria-label="所有分頁"><Down color="#777" /></SideTab>
    </TabBar>
  </>
);

const EditorToolbar = () => (
  <Toolbar>
    <Grip />
    <ToolGrid $cols={5}>
      <Tool $letter>B</Tool>
      <Tool aria-label="顏色"><ColorText /></Tool>
      <Tool $letter>Tт</Tool>
      <Tool aria-label="調色盤"><Palette /></Tool>
      <Tool aria-label="連結"><Link /></Tool>
      <Tool aria-label="靠左"><AlignLeft /></Tool>
      <Tool aria-label="表格"><TableRemove /></Tool>
      <Tool aria-label="編號"><Numbers /></Tool>
      <Tool $tag="#555">Hide</Tool>
      <Tool $tag="#4a7fd0">Free</Tool>
    </ToolGrid>
    <Grip />
    <ToolGrid $cols={4}>
      <Tool aria-label="移除連結"><Link broken /></Tool>
      <Tool aria-label="清除格式"><SmallA clear /></Tool>
      <Tool aria-label="復原"><Arrow /></Tool>
      <Tool aria-label="重做"><Arrow flip /></Tool>
      <Tool aria-label="儲存"><Disc /></Tool>
      <Tool aria-label="載入"><Disc go /></Tool>
      <Tool aria-label="清空"><Page tint="#eef1f5" /></Tool>
      <Tool aria-label="字數"><Sigma /></Tool>
    </ToolGrid>
    <Grip />
    <BigTools>
      {bigTools.map(([label, Glyph]) => (
        <BigTool key={label}>
          <Glyph />
          {label}
        </BigTool>
      ))}
    </BigTools>
    <Grip />
    <ExtraTools>
      <SmallA /><span>ra</span><span>w</span><SmallA mark={{ text: "2", y: 7 }} />
      <Penguin /><span>rm</span><span>w</span><SmallA mark={{ text: "2", y: 16 }} />
    </ExtraTools>
  </Toolbar>
);

const UploadPopup = () => (
  <Popup>
    <PopupTabs>
      <PopupTab>網絡圖片</PopupTab>
      <PopupTab>圖片列表</PopupTab>
      <PopupTab>普通上傳</PopupTab>
      <PopupTab $active>批量上傳</PopupTab>
      <PopupClose aria-label="關閉"><Cross size={9} /></PopupClose>
    </PopupTabs>
    <Uploader>
      <UploadBar>
        <UploadButton>瀏覽</UploadButton>
        <UploadButton disabled>上傳</UploadButton>
        <span>上傳進度</span>
        <Meter />
        <span>0/0</span>
        <DeleteButton>刪除</DeleteButton>
      </UploadBar>
      <UploadTable>
        <thead>
          <tr>
            <th>文件名</th>
            <th>文件大小</th>
            <th>上傳進度</th>
          </tr>
        </thead>
      </UploadTable>
    </Uploader>
  </Popup>
);

const PostPage = () => (
  <Viewport>
    <PageArea>
      <Sheet>
        <Heading>
          <H1>發新話題</H1>
          <Reward>發帖後您的 經驗 +5  金錢 +5</Reward>
        </Heading>
        <SubjectRow>
          <TypeButton aria-label="圖標">
            <Page line="#ccc" />
            <Down color="#aaa" />
          </TypeButton>
          <Subject aria-label="標題" defaultValue="Testing" />
        </SubjectRow>
        <Editor>
          <EditorToolbar />
          <UploadPopup />
        </Editor>
        <Options>
          <OptionsTitle>發帖選項:</OptionsTitle>
          <OptionColumns>
            <OptionColumn $w={146} $pad={3} $line>
              <Option><Checkbox disabled />Html 代碼</Option>
              <Option><Checkbox disabled defaultChecked />[img] 代碼</Option>
            </OptionColumn>
            <OptionColumn $w={300} $pad={14}>
              <Option><Checkbox />禁用 URL 識別</Option>
              <Option><Checkbox /><span>禁用 <a href="#smilies">Smilies</a></span></Option>
              <Option><Checkbox /><span>禁用 <a href="#code">Discuz!代碼</a></span></Option>
            </OptionColumn>
          </OptionColumns>
          <Submit>發新話題</Submit>
        </Options>
      </Sheet>
    </PageArea>
    <Scrollbar>
      <ScrollButton aria-label="向上"><Chevron up /></ScrollButton>
      <ScrollGap $size={104} />
      <ScrollThumb />
      <ScrollGap $size={101} />
      <ScrollButton aria-label="向下"><Chevron /></ScrollButton>
    </Scrollbar>
  </Viewport>
);

const FileDialog = () => (
  <Dialog role="dialog" aria-label="選取檔案">
    <DialogTitle>
      <WindowTitle>
        選取要透過如下位置上傳的檔案: <DialogSite>bbs.rc-evo.com</DialogSite>
      </WindowTitle>
      <CaptionButton>?</CaptionButton>
      <CaptionButton $danger aria-label="關閉"><Cross size={12} /></CaptionButton>
    </DialogTitle>
    <DialogBody>
      <LookLabel htmlFor="look">查詢(<u>I</u>):</LookLabel>
      <LookRow>
        <Combo $w={261} $h={22}>
          <Folder />
          <select id="look"><option>TITC</option></select>
          <ComboArrow tabIndex={-1} aria-label="展開"><Chevron /></ComboArrow>
        </Combo>
        <DialogTools>
          <IconButton aria-label="返回"><GoBack /></IconButton>
          <IconButton aria-label="上一層"><GoUp /></IconButton>
          <IconButton aria-label="新資料夾"><NewFolder /></IconButton>
        </DialogTools>
        <ViewButton aria-label="檢視"><Views /><Down color="#000" /></ViewButton>
      </LookRow>
      <Places>
        {places.map(([label, glyph]) => (
          <Place key={label}>
            {glyph}
            {label}
          </Place>
        ))}
      </Places>
      <Files>
        <FileList>
          {files.map((f, i) => (
            <FileRow key={f}>
              <Jpeg />
              <FileName $focus={i === 0}>{f}</FileName>
            </FileRow>
          ))}
          <Marquee as="li" aria-hidden="true" />
        </FileList>
        <FileForm>
          <label htmlFor="name">檔名(<u>N</u>):</label>
          <Combo $w={245}>
            <input id="name" defaultValue={'"100_5780.jpg" "100_5781.jpg" "100_5782.jpg"'} />
            <ComboArrow tabIndex={-1} aria-label="展開"><Chevron /></ComboArrow>
          </Combo>
          <DialogButton $primary>開啓(<u>O</u>)</DialogButton>
          <label htmlFor="kind">檔案類型(<u>T</u>):</label>
          <Combo $w={245}>
            <select id="kind"><option>Image File (*.jpg,*.jpeg,*.gif)</option></select>
            <ComboArrow tabIndex={-1} aria-label="展開"><Chevron /></ComboArrow>
          </Combo>
          <DialogButton>取消</DialogButton>
        </FileForm>
      </Files>
    </DialogBody>
  </Dialog>
);

const App = () => (
  <Screen>
    <GlobalStyle />
    <Workspace>
      <BrowserChrome />
      <PostPage />
      <StatusBar>
        <span>從 bbs.rc-evo.com 接收資料...</span>
        <StatusIcons>
          <Firefox />
          <Monkey />
          <Quill />
        </StatusIcons>
      </StatusBar>
      <FileDialog />
    </Workspace>
    <Taskbar>
      <Start><WindowsFlag />開始</Start>
      <QuickLaunch>
        <Firefox />
        <Candy />
        <Diamond />
        <More aria-label="更多">»</More>
      </QuickLaunch>
      <Task $active><Firefox />測試版 - RC EVOLUT...</Task>
      <Task><Panda />格式工廠 2.50</Task>
      <Lang>CH</Lang>
      <Tray>
        <Penguin />
        <Buddy />
        <Eject />
        <GreenBox />
        <Network />
        <Speaker />
        <Shield />
        <Plug />
        <Time>下午 09:39</Time>
      </Tray>
    </Taskbar>
  </Screen>
);

export default App;
